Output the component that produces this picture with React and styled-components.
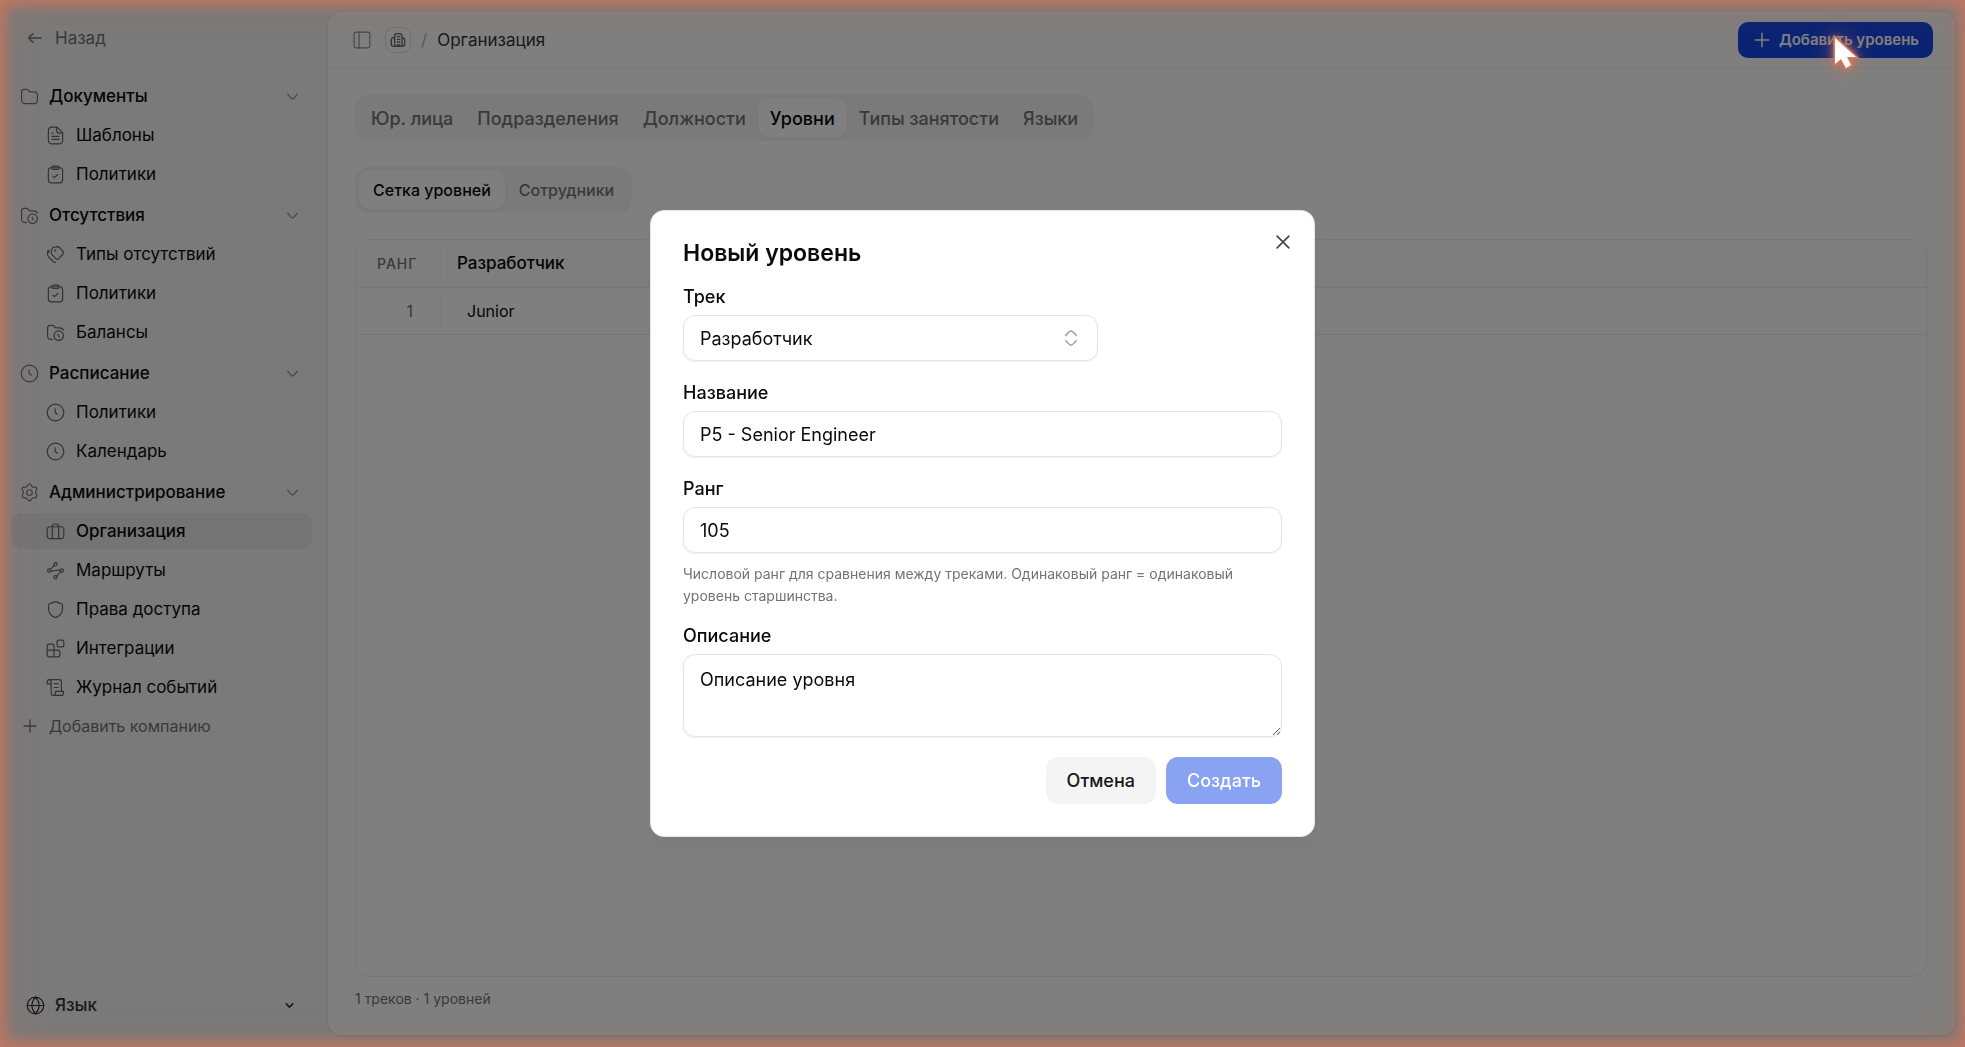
import React, { useState } from 'react';
import styled, { createGlobalStyle, css } from 'styled-components';

const ORANGE = '217, 119, 87';

const GlobalStyle = createGlobalStyle`
	*, *::before, *::after{
		box-sizing: border-box;
	}
	body{
		margin: 0;
		background: #f5f5f5;
		color: #0a0a0a;
		font-family: Inter, "Liberation Sans", sans-serif;
		font-size: 17px;
		-webkit-font-smoothing: antialiased;
	}
	button, input, select, textarea{
		font: inherit;
		color: inherit;
	}
`;

const Svg = styled.svg`
	display: block;
	flex: none;
	width: ${props => props.$size || 19}px;
	height: ${props => props.$size || 19}px;
	fill: none;
	stroke: currentColor;
	stroke-width: ${props => props.$stroke || 1.5};
	stroke-linecap: round;
	stroke-linejoin: round;
`;

const shapes = {
	back: <path d="M4 12h16M9.500 6.500S4 10.500 4 12s5.500 5.500 5.500 5.500" />,
	folder: <path d="M8 21h8c3.500 0 6 0 6-4.500V11c0-4-1-4.800-5-4.800h-3.500c-1.500 0-2-.5-2.600-1.600C10.200 3.300 9.500 3 8 3H5.500C3 3 2 4 2 6.500V16c0 4 1.500 5 6 5z" />,
	folderClock: <>
		<path d="M8 21c-4.500 0-6-1-6-5V6.500C2 4 3 3 5.500 3H8c1.500 0 2.200.3 2.900 1.600.6 1.100 1.100 1.600 2.600 1.600H17c3 0 4.300.6 4.800 2.800" />
		<circle cx="16" cy="16" r="6" />
		<path d="M15.500 14v2.200l1.500 1.300" />
	</>,
	file: <>
		<path d="M3 18V6c0-3 1-4.500 4.500-4.500H14L21 8.500V18c0 3-1 4.500-4.500 4.500h-9C4 22.500 3 21 3 18z" />
		<path d="M13.500 2v4c0 2 1 3 3 3h4M7.500 9h1.500M7.500 13h9M7.500 17h9" />
	</>,
	clipboard: <>
		<rect x="3" y="3.500" width="18" height="19" rx="3.500" />
		<path d="M9 1.500h6c2.300 0 2.300 4 0 4H9c-2.300 0-2.300-4 0-4zM8.500 14l2.200 2 4.300-4" />
	</>,
	tags: <>
		<path d="M8 3.500 14 2c1.500 0 2.400.5 3.400 1.500l3.600 4c1.500 1.700 1.500 2.800 0 4.500l-4.500 5c-1.700 1.500-2.900 1.500-4.500 0l-3.500-3.800C7 11.600 6.500 10.500 6.500 9z" />
		<path d="M2 7.500v4c0 1.500.4 2.600 1.400 3.700L9 21c1 .9 2 1 3 1M3.500 6.500v3" />
		<circle cx="11.500" cy="7" r=".6" />
	</>,
	clock: <>
		<circle cx="12" cy="12" r="10.500" />
		<path d="M11.500 7.500V12l3 2.200" />
	</>,
	gear: <>
		<path d="M9.300 3.700C10 2.200 10.800 1.500 12 1.500s2 .7 2.700 2.200c.6 1.300 1.500 1.800 2.900 1.600 1.700-.2 2.800.2 3.400 1.200s.4 2.100-.6 3.500c-.9 1.200-.9 2.800 0 4 1 1.400 1.200 2.500.6 3.500s-1.700 1.400-3.400 1.200c-1.400-.2-2.300.3-2.900 1.600-.7 1.500-1.500 2.200-2.700 2.200s-2-.7-2.700-2.200c-.6-1.300-1.500-1.800-2.900-1.600-1.700.2-2.800-.2-3.400-1.200s-.4-2.100.6-3.500c.9-1.200.9-2.800 0-4-1-1.400-1.200-2.500-.6-3.500s1.700-1.400 3.400-1.200c1.400.2 2.300-.3 2.900-1.600z" />
		<circle cx="12" cy="12" r="3.500" />
	</>,
	briefcase: <>
		<rect x="1.500" y="6" width="21" height="15" rx="4" />
		<path d="M8 21V5.500C8 3.500 9 2.500 11 2.500h2c2 0 3 1 3 3V21" />
	</>,
	route: <>
		<circle cx="12" cy="4" r="2" />
		<circle cx="4" cy="12" r="2" />
		<circle cx="20" cy="12" r="2" />
		<circle cx="12" cy="20.500" r="2" />
		<path d="M10.500 5.500 5.500 10.500M6 12.500h4c2 0 2-1 4-1h4M13.500 19l5-5.500" />
	</>,
	shield: <path d="M12 2c1.500 0 4.500 2.200 7 2.400 1.500.2 1.800.7 1.800 2.600v4.500c0 5.500-4.300 9.200-7.100 10.200-1.200.4-2.200.4-3.400 0-2.800-1-7.100-4.700-7.100-10.200V7c0-1.900.3-2.400 1.800-2.600C7.500 4.200 10.500 2 12 2z" />,
	blocks: <>
		<rect x="14" y="1.500" width="8.500" height="8.500" rx="1.800" />
		<path d="M10 14V9c0-1.500-1-2.500-2.500-2.500H4C2.500 6.500 1.500 7.500 1.500 9v10.500C1.500 21.500 2.500 22.500 4.500 22.500h10.500c1.500 0 2.500-1 2.500-2.500v-3.500c0-1.500-1-2.500-2.500-2.500H1.500M10 14v8.500" />
	</>,
	scroll: <>
		<path d="M4 2h12c2.500 0 3.500 1 3.500 3.500V16M6.500 8v10.500c0 2 .8 3.500 3 3.500H19c2 0 3-1 3-2.500V17H12v1.500c0 2-.8 3.500-2.500 3.500" />
		<path d="M4 2C2 2 1.500 3.500 1.500 5v2.500h5V5C6.500 3.500 6 2 4 2zM10.500 7h5M10.500 12h5" />
	</>,
	plus: <path d="M12 3v18M3 12h18" />,
	chevron: <path d="M18 9s-4.400 6-6 6-6-6-6-6" />,
	chevronSmall: <path d="m6 9 6 6 6-6" />,
	globe: <>
		<circle cx="12" cy="12" r="10.500" />
		<path d="M1.500 12h21M12 1.500c6 6.500 6 14.500 0 21M12 1.500c-6 6.500-6 14.500 0 21" />
	</>,
	panel: <>
		<rect x="1.500" y="1.500" width="21" height="21" rx="2.500" />
		<path d="M8 1.500v21" />
	</>,
	building: <>
		<path d="M7 21.500V6.500C7 3.500 8 2.500 10.500 2.500h4C17 2.500 18 3.500 18 6.500v15M7 8.500H5.500C3 8.500 2 9.500 2 12v6c0 2.500 1 3.500 3.500 3.500h13c2.500 0 3.500-1 3.500-3.500v-6c0-2.500-1-3.500-3.500-3.500H18" />
		<path d="M11 7h3.500M11 11h3.500M11 15h3.500M11 21.500v-2h3.500v2" />
	</>,
	close: <path d="M5 5l14 14M19 5 5 19" />,
	upDown: <path d="M5 8.500s5-6 7-6 7 6 7 6M5 15.500s5 6 7 6 7-6 7-6" />,
};

const Icon = ({ name, size, stroke }) => (
	<Svg viewBox="0 0 24 24" $size={size} $stroke={stroke} aria-hidden="true">{shapes[name]}</Svg>
);

const Shell = styled.div`
	display: flex;
	height: 100vh;
`;

const Sidebar = styled.aside`
	display: flex;
	flex-direction: column;
	flex: none;
	width: 328px;
	padding: 20px 16px 24px 11px;
`;

const resetButton = css`
	border: 0;
	background: none;
	padding: 0;
	text-align: left;
`;

const BackLink = styled.a`
	display: flex;
	align-items: center;
	gap: 11px;
	height: 36px;
	padding: 0 15px;
	color: #737373;
	text-decoration: none;
`;

const Nav = styled.nav`
	display: flex;
	flex-direction: column;
	padding-top: 22px;
`;

const Group = styled.section`
	margin-bottom: 2px;
	&:last-of-type{
		margin-bottom: 0;
	}
`;

const GroupToggle = styled.button`
	${resetButton}
	display: flex;
	align-items: center;
	width: 301px;
	height: 36px;
	margin-bottom: 3px;
	padding: 0 10px 0 9px;
	gap: 10px;
	font-weight: 500;
	svg{
		color: #737373;
	}
	svg:last-child{
		margin-left: auto;
		color: #8a8a8a;
	}
`;

const Items = styled.ul`
	display: flex;
	flex-direction: column;
	gap: 3px;
	margin: 0 0 3px;
	padding: 0;
	list-style: none;
`;

const ItemLink = styled.a`
	display: flex;
	align-items: center;
	gap: 11px;
	width: 301px;
	height: 36px;
	padding-left: 35px;
	border-radius: 10px;
	color: inherit;
	text-decoration: none;
	svg{
		color: #666;
	}
	${props => props.$active && css`
		background: #e8e8e8;
		font-weight: 500;
	`}
`;

const AddCompany = styled.button`
	${resetButton}
	display: flex;
	align-items: center;
	gap: 11px;
	height: 36px;
	padding: 0 11px;
	color: #737373;
	font-size: 16px;
`;

const Language = styled.button`
	${resetButton}
	display: flex;
	align-items: center;
	gap: 10px;
	width: 301px;
	height: 36px;
	margin-top: auto;
	padding: 0 16px 0 15px;
	font-weight: 500;
	color: #333;
	svg:last-child{
		margin-left: auto;
	}
`;

const Main = styled.main`
	display: flex;
	flex-direction: column;
	flex: 1;
	min-width: 0;
	margin: 12px 10px 12px 0;
	border-radius: 14px;
	background: #fff;
	box-shadow: 0 1px 4px rgba(0, 0, 0, 0.1);
`;

const Header = styled.header`
	display: flex;
	align-items: center;
	gap: 10px;
	height: 56px;
	padding: 0 22px 0 25px;
	border-bottom: 1px solid #f0f0f0;
`;

const PanelToggle = styled.button`
	${resetButton}
	margin-right: 4px;
	color: #8a8a8a;
`;

const HomeLink = styled.a`
	display: grid;
	place-items: center;
	width: 26px;
	height: 26px;
	border: 1px solid #e0e0e0;
	border-radius: 8px;
	color: #666;
`;

const Slash = styled.span`
	color: #b5b5b5;
`;

const Crumb = styled.span`
	color: #333;
`;

const AddLevel = styled.button`
	display: flex;
	align-items: center;
	gap: 8px;
	height: 36px;
	margin-left: auto;
	padding: 0 14px 0 15px;
	border: 0;
	border-radius: 10px;
	background: #1447e6;
	color: #fff;
	font-size: 15px;
	font-weight: 600;
`;

const Content = styled.div`
	display: flex;
	flex-direction: column;
	align-items: flex-start;
	flex: 1;
	padding: 27px 28px 26px 27px;
`;

const Tabs = styled.div`
	display: flex;
	height: 46px;
	padding: 4px;
	margin-bottom: 26px;
	border-radius: 14px;
	background: #f5f5f5;
`;

const Tab = styled.button`
	border: 0;
	padding: 0 ${props => props.$small ? 14 : 12}px;
	border-radius: 10px;
	background: none;
	color: #737373;
	font-size: ${props => props.$small ? 16 : 18}px;
	font-weight: 500;
	${props => props.$active && css`
		background: #fff;
		color: #0a0a0a;
		box-shadow: 0 1px 3px rgba(0, 0, 0, 0.06);
	`}
`;

const TableFrame = styled.div`
	flex: 1;
	width: 100%;
	border: 1px solid #ececec;
	border-radius: 14px;
	overflow: hidden;
`;

const Table = styled.table`
	width: 100%;
	border-collapse: collapse;
	text-align: left;
	th, td{
		height: 47px;
		padding: 0 16px;
		border-bottom: 1px solid #ececec;
	}
	thead{
		background: #fcfcfc;
	}
	th{
		font-weight: 500;
	}
	td{
		padding-left: 26px;
		font-size: 16px;
	}
	th:first-child, td:first-child{
		width: 85px;
		padding: 0 0 0 21px;
		background: linear-gradient(#f4f4f4, #f4f4f4) right center / 1px 32px no-repeat;
	}
	th:first-child{
		color: #737373;
		font-size: 14px;
		letter-spacing: 1px;
	}
	td:first-child{
		padding-right: 28px;
		color: #737373;
		text-align: right;
	}
`;

const Summary = styled.p`
	margin: 12px 0 0;
	color: #737373;
	font-size: 14px;
	line-height: 20px;
`;

const Overlay = styled.div`
	position: fixed;
	inset: 0;
	display: flex;
	align-items: center;
	justify-content: center;
	background: rgba(0, 0, 0, 0.5);
`;

const Dialog = styled.form`
	position: relative;
	width: 665px;
	padding: 32px;
	border: 1px solid #e5e5e5;
	border-radius: 14px;
	background: #fff;
	box-shadow: 0 12px 18px rgba(0, 0, 0, 0.04);
`;

const Title = styled.h2`
	margin: 0 0 22px;
	font-size: 23px;
	font-weight: 600;
	line-height: 20px;
`;

const CloseButton = styled.button`
	${resetButton}
	position: absolute;
	top: 21px;
	right: 21px;
	color: #444;
`;

const Field = styled.div`
	display: flex;
	flex-direction: column;
	align-items: flex-start;
	gap: 7px;
	margin-bottom: 20px;
`;

const Label = styled.label`
	font-size: 18px;
	font-weight: 500;
	line-height: 23px;
`;

const boxed = css`
	width: 100%;
	height: 46px;
	padding: 0 16px;
	border: 1px solid #e5e5e5;
	border-radius: 12px;
	background: #fff;
	font-size: 18px;
	box-shadow: 0 1px 2px rgba(0, 0, 0, 0.06);
	outline: none;
`;

const Input = styled.input`
	${boxed}
`;

const SelectWrap = styled.div`
	position: relative;
	width: 415px;
	svg{
		position: absolute;
		top: 14px;
		right: 18px;
		color: #999;
		pointer-events: none;
	}
`;

const Select = styled.select`
	${boxed}
	appearance: none;
`;

const Textarea = styled.textarea`
	${boxed}
	display: block;
	height: 83px;
	padding: 12px 16px;
	line-height: 25px;
	resize: vertical;
`;

const Hint = styled.p`
	margin: 3px 0 -3px;
	color: #737373;
	font-size: 14px;
	line-height: 22px;
`;

const Actions = styled.div`
	display: flex;
	justify-content: flex-end;
	gap: 10px;
`;

const ActionButton = styled.button`
	height: 47px;
	padding: 0 21px;
	border: 0;
	border-radius: 12px;
	font-size: 18px;
	font-weight: 500;
	background: ${props => props.$primary ? '#1447e6' : '#f4f4f4'};
	color: ${props => props.$primary ? '#fff' : '#171717'};
	opacity: ${props => props.disabled ? 0.5 : 1};
`;

const Glow = styled.div`
	position: fixed;
	inset: 0;
	pointer-events: none;
	box-shadow:
		inset 0 0 12px 5px rgba(${ORANGE}, 0.55),
		inset 0 0 20px rgba(${ORANGE}, 0.4),
		inset 0 0 40px rgba(${ORANGE}, 0.2);
`;

const Pointer = styled.svg`
	position: fixed;
	top: 34px;
	right: 105px;
	width: 30px;
	height: 36px;
	overflow: visible;
	pointer-events: none;
	filter: drop-shadow(0 0 3px rgba(${ORANGE}, 0.9)) drop-shadow(0 0 10px rgba(${ORANGE}, 0.6));
`;

const groups = [
	{ title: 'Документы', icon: 'folder', items: [
		['Шаблоны', 'file'],
		['Политики', 'clipboard'],
	] },
	{ title: 'Отсутствия', icon: 'folderClock', items: [
		['Типы отсутствий', 'tags'],
		['Политики', 'clipboard'],
		['Балансы', 'folderClock'],
	] },
	{ title: 'Расписание', icon: 'clock', items: [
		['Политики', 'clock'],
		['Календарь', 'clock'],
	] },
	{ title: 'Администрирование', icon: 'gear', items: [
		['Организация', 'briefcase'],
		['Маршруты', 'route'],
		['Права доступа', 'shield'],
		['Интеграции', 'blocks'],
		['Журнал событий', 'scroll'],
	] },
];

const sections = ['Юр. лица', 'Подразделения', 'Должности', 'Уровни', 'Типы занятости', 'Языки'];
const views = ['Сетка уровней', 'Сотрудники'];

const TabList = ({ names, initial, small }) => {
	const [current, setCurrent] = useState(initial);
	return (
		<Tabs role="tablist">
			{names.map(name => (
				<Tab key={name} role="tab" type="button" $small={small} $active={name === current}
					aria-selected={name === current} onClick={() => setCurrent(name)}>{name}</Tab>
			))}
		</Tabs>
	);
};

const SideNav = () => (
	<Sidebar>
		<BackLink href="#back"><Icon name="back" size={18} stroke={2} />Назад</BackLink>
		<Nav>
			{groups.map(group => (
				<Group key={group.title}>
					<GroupToggle type="button" aria-expanded="true">
						<Icon name={group.icon} />
						{group.title}
						<Icon name="chevron" />
					</GroupToggle>
					<Items>
						{group.items.map(([name, icon]) => (
							<li key={name}>
								<ItemLink href="#item" $active={name === 'Организация'}>
									<Icon name={icon} />
									{name}
								</ItemLink>
							</li>
						))}
					</Items>
				</Group>
			))}
			<AddCompany type="button"><Icon name="plus" size={16} stroke={2} />Добавить компанию</AddCompany>
		</Nav>
		<Language type="button">
			<Icon name="globe" />
			Язык
			<Icon name="chevronSmall" size={13} stroke={3} />
		</Language>
	</Sidebar>
);

const NewLevelDialog = ({ onClose }) => {
	const [name, setName] = useState('P5 - Senior Engineer');
	const [rank, setRank] = useState('105');
	const [description, setDescription] = useState('Описание уровня');
	return (
		<Overlay>
			<Dialog role="dialog" aria-modal="true" aria-labelledby="dialog-title" onSubmit={e => e.preventDefault()}>
				<Title id="dialog-title">Новый уровень</Title>
				<CloseButton type="button" aria-label="Закрыть" onClick={onClose}>
					<Icon name="close" size={20} stroke={2} />
				</CloseButton>
				<Field>
					<Label htmlFor="track">Трек</Label>
					<SelectWrap>
						<Select id="track" defaultValue="dev">
							<option value="dev">Разработчик</option>
						</Select>
						<Icon name="upDown" size={18} stroke={2} />
					</SelectWrap>
				</Field>
				<Field>
					<Label htmlFor="name">Название</Label>
					<Input id="name" value={name} onChange={e => setName(e.target.value)} />
				</Field>
				<Field>
					<Label htmlFor="rank">Ранг</Label>
					<Input id="rank" inputMode="numeric" value={rank} onChange={e => setRank(e.target.value)} />
					<Hint>Числовой ранг для сравнения между треками. Одинаковый ранг = одинаковый уровень старшинства.</Hint>
				</Field>
				<Field>
					<Label htmlFor="description">Описание</Label>
					<Textarea id="description" value={description} onChange={e => setDescription(e.target.value)} />
				</Field>
				<Actions>
					<ActionButton type="button" onClick={onClose}>Отмена</ActionButton>
					<ActionButton type="submit" $primary disabled>Создать</ActionButton>
				</Actions>
			</Dialog>
		</Overlay>
	);
};

const App = () => {
	const [open, setOpen] = useState(true);
	return (
		<>
			<GlobalStyle />
			<Shell>
				<SideNav />
				<Main>
					<Header>
						<PanelToggle type="button" aria-label="Боковая панель"><Icon name="panel" size={18} /></PanelToggle>
						<HomeLink href="#home" aria-label="Компания"><Icon name="building" size={16} stroke={2} /></HomeLink>
						<Slash>/</Slash>
						<Crumb>Организация</Crumb>
						<AddLevel type="button" onClick={() => setOpen(true)}>
							<Icon name="plus" size={18} stroke={2} />
							Добавить уровень
						</AddLevel>
					</Header>
					<Content>
						<TabList names={sections} initial="Уровни" />
						<TabList names={views} initial="Сетка уровней" small />
						<TableFrame>
							<Table>
								<thead>
									<tr><th>РАНГ</th><th>Разработчик</th></tr>
								</thead>
								<tbody>
									<tr><td>1</td><td>Junior</td></tr>
								</tbody>
							</Table>
						</TableFrame>
						<Summary>1 треков · 1 уровней</Summary>
					</Content>
				</Main>
			</Shell>
			{open && <NewLevelDialog onClose={() => setOpen(false)} />}
			<Glow />
			<Pointer viewBox="0 0 30 36" aria-hidden="true">
				<path d="M5 4v26l6-5 5 9 5-3-4-8h9z" fill="#fff" stroke={`rgb(${ORANGE})`} strokeWidth="3" paintOrder="stroke" />
			</Pointer>
		</>
	);
};

export default App;
